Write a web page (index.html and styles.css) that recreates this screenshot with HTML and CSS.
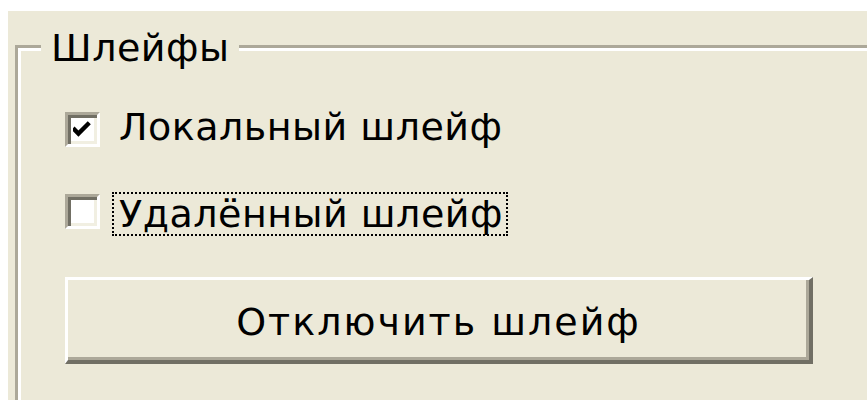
FILE: index.html
```html
<!DOCTYPE html>
<html lang="ru">
<head>
<meta charset="utf-8">
<title>Шлейфы</title>
<link rel="stylesheet" href="styles.css">
</head>
<body>
<div class="dialog">
  <div class="group">
    <div class="group-title"><span class="title-text">Шлейфы</span></div>
    <div class="group-body">
      <label class="check-row">
        <span class="checkbox">
          <svg class="tick" viewBox="0 0 7 7" width="19" height="19"><path d="M0 3 L2 5 L6 1" fill="none" stroke="#000" stroke-width="1.6"/></svg>
        </span>
        <span class="check-label">Локальный шлейф</span>
      </label>
      <label class="check-row">
        <span class="checkbox"></span>
        <span class="check-label focused">Удалённый шлейф</span>
      </label>
      <button class="push-button" type="button">Отключить шлейф</button>
    </div>
  </div>
</div>
</body>
</html>
```
FILE: styles.css
```css
html, body {
  margin: 0;
  background: #ffffff;
  overflow: hidden;
}

.dialog {
  margin: 11px 0 0 8px;
  height: 389px;
  overflow: hidden;
  background: #ece9d8;
  padding: 34px 0 0 7px;
  box-sizing: border-box;
  font-family: "DejaVu Sans", "Liberation Sans", sans-serif;
  font-size: 38px;
  letter-spacing: 0.5px;
  color: #000;
}

/* etched group frame: dark line with a white highlight inside */
.group {
  border-top: 3px solid #aca899;
  border-left: 3px solid #aca899;
  box-shadow: inset 3px 3px 0 #ffffff;
  height: 400px;
}

.group-title {
  height: 0;
  padding-left: 23px;
}

.title-text {
  display: inline-block;
  position: relative;
  top: -25px;
  padding: 0 9px 0 10px;
  background: #ece9d8;
  line-height: 50px;
}

.group-body {
  padding: 56px 0 0 47px;
  display: flex;
  flex-direction: column;
  align-items: flex-start;
}

.check-row {
  display: flex;
  align-items: center;
  height: 50px;
  margin-bottom: 32px;
}

.checkbox {
  width: 35px;
  height: 35px;
  flex: none;
  box-sizing: border-box;
  background: #fff;
  border-style: solid;
  border-width: 3px;
  border-color: #aca899 #ffffff #ffffff #aca899;
  box-shadow: inset 3px 3px 0 #716f64, inset -3px -3px 0 #f1efe2;
  display: flex;
  align-items: center;
  justify-content: center;
}

.tick {
  display: block;
}

.check-label {
  margin-left: 13px;
  padding: 0 3px 4px 4px;
  line-height: 40px;
  border: 2px dotted transparent;
}

/* keyboard focus: dotted rectangle around the caption */
.check-label.focused {
  margin: 5px 0 0 12px;
  border-color: #000;
  line-height: 36px;
  padding: 2px 3px 2px 5px;
}

.push-button {
  width: 748px;
  height: 87px;
  margin-top: 9px;
  font: inherit;
  letter-spacing: 2px;
  color: #000;
  background: #ece9d8;
  border-style: solid;
  border-width: 3px 4px 4px 3px;
  border-color: #ffffff #716f64 #716f64 #ffffff;
  box-shadow: inset -3px -3px 0 #aca899;
  padding: 4px 0 0;
}
```
